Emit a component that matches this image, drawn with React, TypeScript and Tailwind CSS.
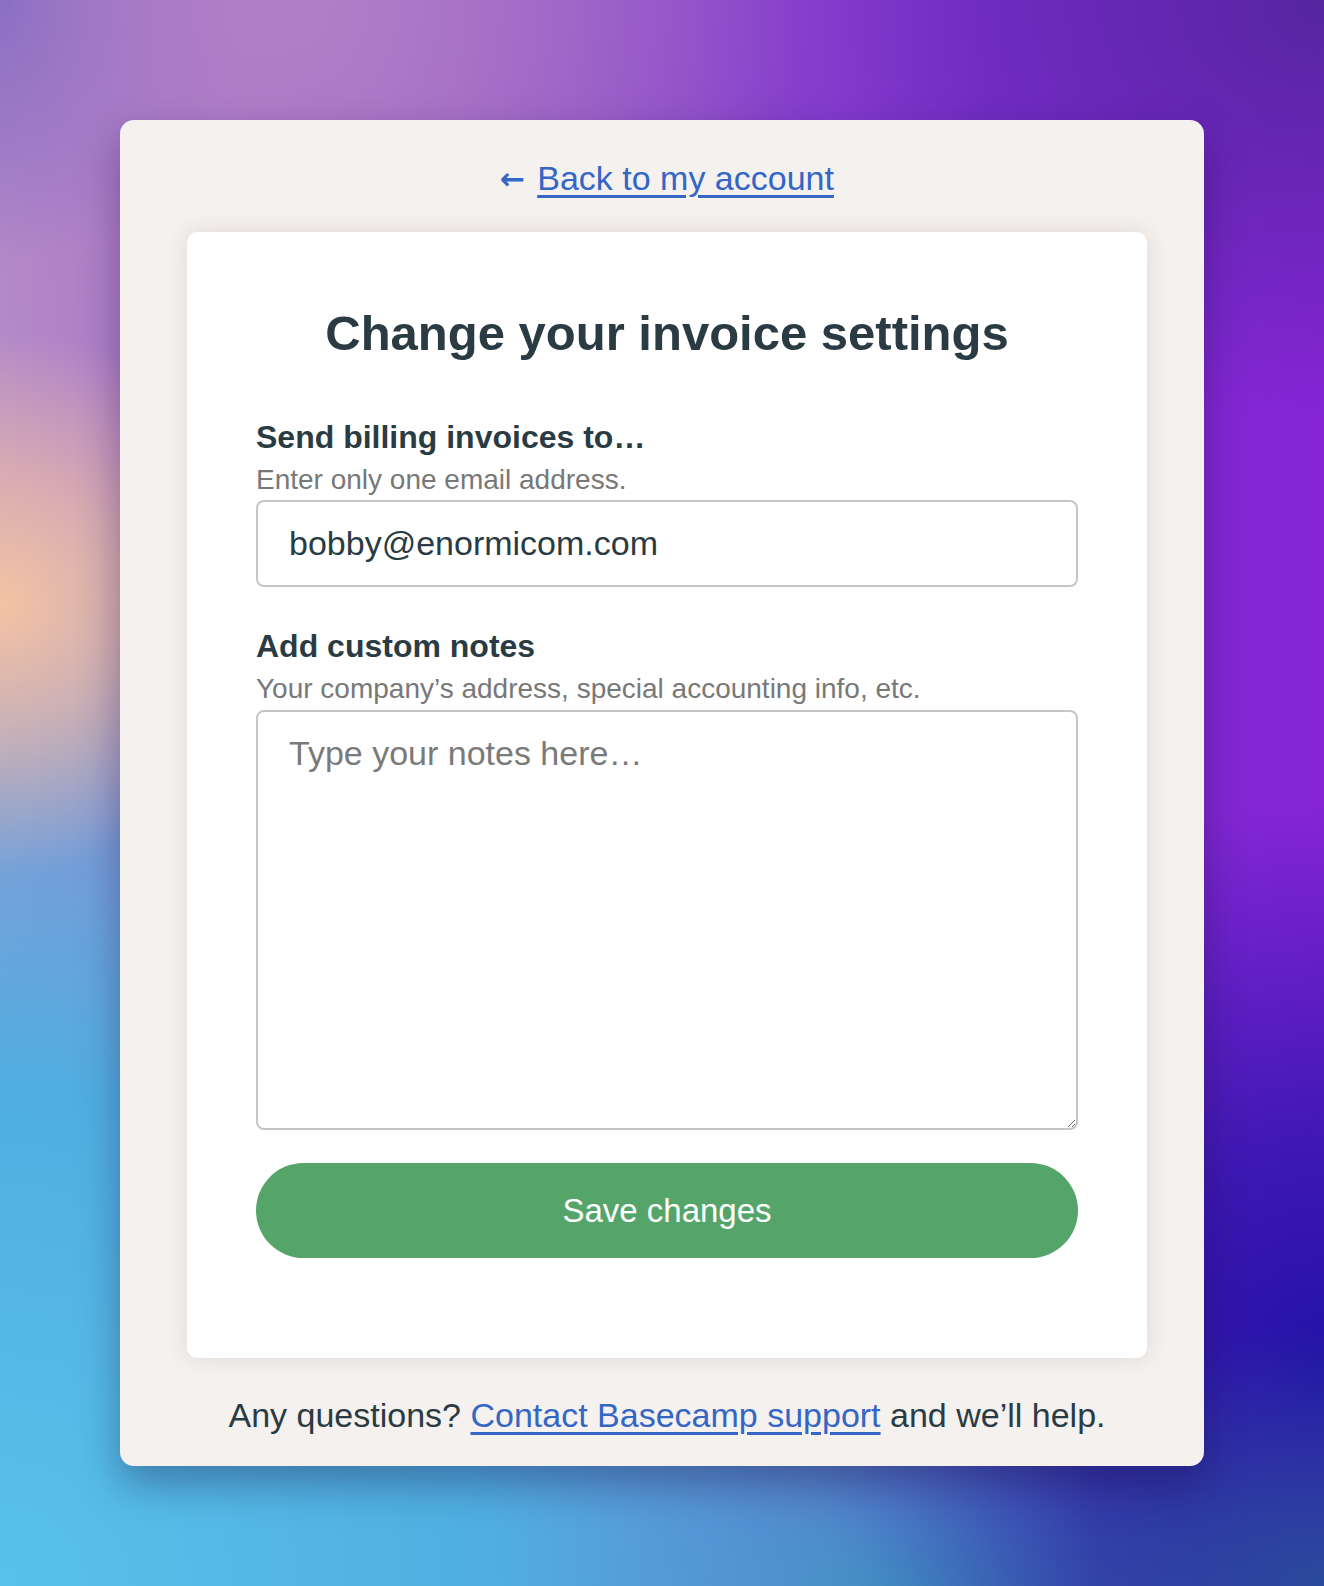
import React, { useState } from 'react';

const font = "font-['Liberation_Sans',Arial,sans-serif]";

export default function App() {
  const [email, setEmail] = useState('bobby@enormicom.com');
  const [notes, setNotes] = useState('');

  return (
    <div
      className={`min-h-screen w-full py-[120px] ${font} bg-[radial-gradient(ellipse_300px_270px_at_0%_38%,#f4c3a3_0%,rgba(244,195,163,0.6)_45%,rgba(244,195,163,0)_100%),radial-gradient(ellipse_1100px_1100px_at_0%_100%,#58c2ea_0%,#50aee2_45%,rgba(80,174,226,0)_100%),radial-gradient(ellipse_460px_260px_at_100%_100%,#2a4a9c_0%,rgba(42,74,156,0)_100%),radial-gradient(ellipse_520px_560px_at_100%_86%,#2212a6_0%,rgba(34,18,166,0.7)_40%,rgba(34,18,166,0)_100%),radial-gradient(ellipse_560px_260px_at_68%_100%,#3a80b2_0%,rgba(58,128,178,0)_100%),radial-gradient(ellipse_520px_520px_at_22%_0%,#b27ec6_0%,rgba(178,126,198,0)_100%),radial-gradient(ellipse_500px_420px_at_100%_0%,#5526a0_0%,rgba(85,38,160,0)_100%),radial-gradient(ellipse_260px_260px_at_0%_0%,#6a62c2_0%,rgba(106,98,194,0)_100%),linear-gradient(90deg,#b48cc8_0%,#9254c8_40%,#7c2ed0_75%,#8624d6_100%)]`}
    >
      {/* Outer panel */}
      <div className="mx-auto w-[1084px] rounded-[14px] bg-[#f5f1ee] pl-[67px] pr-[57px] pt-[38px] pb-[30px] shadow-[0_18px_40px_rgba(20,10,60,0.35)]">
        <div className="flex justify-center text-[34px] leading-[41px] text-[#3466c6]">
          <a href="#" className="flex items-center">
            <span className="mr-[12px] font-['DejaVu_Sans',sans-serif] text-[30px] font-bold">←</span>
            <span className="underline decoration-[2.5px] underline-offset-[5px]">Back to my account</span>
          </a>
        </div>

        {/* Form card */}
        <div className="mt-[33px] rounded-[10px] bg-white px-[69px] pt-[72px] pb-[100px] shadow-[0_0_22px_rgba(60,40,30,0.12)]">
          <h1 className="text-center text-[49px] font-bold leading-[59px] text-[#2a3b44]">
            Change your invoice settings
          </h1>

          <form className="mt-[55px] flex flex-col" onSubmit={(e) => e.preventDefault()}>
            <label htmlFor="email" className="text-[32px] font-bold leading-[38px] text-[#2a3b44]">
              Send billing invoices to…
            </label>
            <p className="mt-[7px] text-[28px] leading-[34px] text-[#787878]">Enter only one email address.</p>
            <input
              id="email"
              value={email}
              onChange={(e) => setEmail(e.target.value)}
              className="mt-[3px] h-[87px] w-full rounded-[8px] border-2 border-[#c6c6c6] bg-white pl-[31px] text-[34px] text-[#2a3b44] outline-none"
            />

            <label htmlFor="notes" className="mt-[40px] text-[32px] font-bold leading-[38px] text-[#2a3b44]">
              Add custom notes
            </label>
            <p className="mt-[7px] text-[28px] leading-[34px] text-[#787878]">
              Your company’s address, special accounting info, etc.
            </p>
            <textarea
              id="notes"
              value={notes}
              onChange={(e) => setNotes(e.target.value)}
              placeholder="Type your notes here…"
              className="mt-[4px] h-[420px] w-full rounded-[8px] border-2 border-[#c6c6c6] bg-white pl-[31px] pt-[21px] text-[34px] leading-[41px] text-[#2a3b44] outline-none placeholder:text-[#7a7a7a]"
            />

            <button
              type="submit"
              className="mt-[33px] h-[95px] w-full rounded-full bg-[#55a56b] text-[33px] text-white"
            >
              Save changes
            </button>
          </form>
        </div>

        <p className="mt-[37px] text-center text-[34px] leading-[41px] text-[#2a3b44]">
          Any questions?{' '}
          <a href="#" className="text-[#3466c6] underline decoration-[2.5px] underline-offset-[5px]">
            Contact Basecamp support
          </a>{' '}
          and we’ll help.
        </p>
      </div>
    </div>
  );
}
